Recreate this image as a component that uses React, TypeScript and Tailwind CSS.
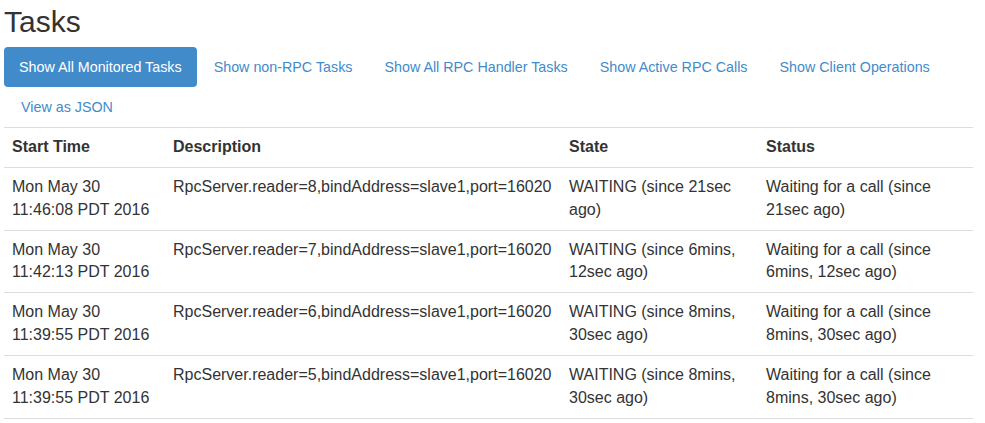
import React from "react";

const links = [
  "Show All Monitored Tasks",
  "Show non-RPC Tasks",
  "Show All RPC Handler Tasks",
  "Show Active RPC Calls",
  "Show Client Operations",
  "View as JSON",
];

const rows = [
  ["Mon May 30 11:46:08 PDT 2016", "RpcServer.reader=8,bindAddress=slave1,port=16020", "WAITING (since 21sec ago)", "Waiting for a call (since 21sec ago)"],
  ["Mon May 30 11:42:13 PDT 2016", "RpcServer.reader=7,bindAddress=slave1,port=16020", "WAITING (since 6mins, 12sec ago)", "Waiting for a call (since 6mins, 12sec ago)"],
  ["Mon May 30 11:39:55 PDT 2016", "RpcServer.reader=6,bindAddress=slave1,port=16020", "WAITING (since 8mins, 30sec ago)", "Waiting for a call (since 8mins, 30sec ago)"],
  ["Mon May 30 11:39:55 PDT 2016", "RpcServer.reader=5,bindAddress=slave1,port=16020", "WAITING (since 8mins, 30sec ago)", "Waiting for a call (since 8mins, 30sec ago)"],
];

export default function App() {
  return (
    <div className="bg-white text-[#333] pl-[4px] pr-[12px] pt-[5px]" style={{ fontFamily: '"Liberation Sans", Arial, sans-serif' }}>
      <h1 className="text-[30px] leading-[33px] font-normal m-0">Tasks</h1>
      <ul className="flex flex-wrap mt-[9px] text-[14.3px] leading-[20px] list-none p-0">
        {links.map((l, i) => (
          <li key={l} className={i === 0 ? "" : "ml-[2px]"}>
            <a
              href="#"
              className={
                "block px-[15px] py-[10px] rounded-[4px] " +
                (i === 0 ? "bg-[#428bca] text-white" : "text-[#428bca]")
              }
            >
              {l}
            </a>
          </li>
        ))}
      </ul>
      <table className="w-[969px] table-fixed border-collapse text-[16px] leading-[1.42857] border-b border-[#ddd]">
        <colgroup>
          <col className="w-[161px]" />
          <col className="w-[396px]" />
          <col className="w-[197px]" />
          <col className="w-[215px]" />
        </colgroup>
        <tbody>
          <tr className="border-t border-[#ddd]">
            {["Start Time", "Description", "State", "Status"].map((h) => (
              <th key={h} className="p-[8px] text-left font-bold align-top">{h}</th>
            ))}
          </tr>
          {rows.map((r, i) => (
            <tr key={i} className="border-t border-[#ddd]">
              {r.map((c, j) => (
                <td key={j} className="p-[8px] align-top">{c}</td>
              ))}
            </tr>
          ))}
        </tbody>
      </table>
    </div>
  );
}
